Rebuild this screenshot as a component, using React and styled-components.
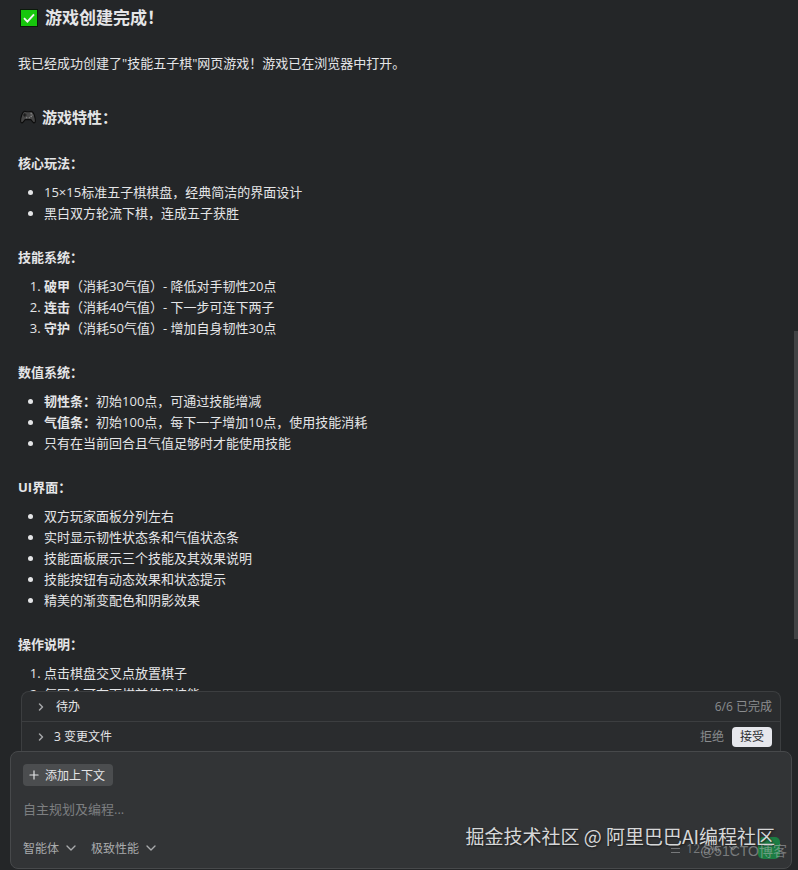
import styled, { createGlobalStyle } from "styled-components";
import { ChevronDown, ChevronRight, Plus } from "lucide-react";

const GlobalStyle = createGlobalStyle`
    * {
        box-sizing: border-box;
    }
    body {
        margin: 0;
        background: #242628;
        color: #e4e5e7;
        font-family: "Open Sans", "Noto Sans CJK SC", sans-serif;
        font-size: 13px;
        line-height: 21px;
    }
    button, select, textarea {
        font: inherit;
        color: inherit;
        border: none;
        background: none;
        padding: 0;
        margin: 0;
    }
`;

const sections = [
    {
        title: "核心玩法：",
        items: [
            { text: "15×15标准五子棋棋盘，经典简洁的界面设计" },
            { text: "黑白双方轮流下棋，连成五子获胜" },
        ],
    },
    {
        title: "技能系统：",
        ordered: true,
        items: [
            { name: "破甲", text: "（消耗30气值）- 降低对手韧性20点" },
            { name: "连击", text: "（消耗40气值）- 下一步可连下两子" },
            { name: "守护", text: "（消耗50气值）- 增加自身韧性30点" },
        ],
    },
    {
        title: "数值系统：",
        items: [
            { name: "韧性条：", text: "初始100点，可通过技能增减" },
            { name: "气值条：", text: "初始100点，每下一子增加10点，使用技能消耗" },
            { text: "只有在当前回合且气值足够时才能使用技能" },
        ],
    },
    {
        title: "UI界面：",
        items: [
            { text: "双方玩家面板分列左右" },
            { text: "实时显示韧性状态条和气值状态条" },
            { text: "技能面板展示三个技能及其效果说明" },
            { text: "技能按钮有动态效果和状态提示" },
            { text: "精美的渐变配色和阴影效果" },
        ],
    },
    {
        title: "操作说明：",
        ordered: true,
        items: [
            { text: "点击棋盘交叉点放置棋子" },
            { text: "每回合可在下棋前使用技能" },
        ],
    },
];

const CheckIcon = () => (
    <svg width="18" height="18" viewBox="0 0 18 18" aria-hidden="true">
        <rect x="0.5" y="0.5" width="17" height="17" fill="#16c60c" stroke="#0b1a0a" />
        <path d="M4 9.2 7.4 12.6 14 5.4" fill="none" stroke="#f4f4f4" strokeWidth="1.9" />
    </svg>
);

const GamepadIcon = () => (
    <svg width="16" height="14" viewBox="0 0 16 14" aria-hidden="true">
        <path
            d="M4 1.5C5 .8 5.8 1.8 8 1.8S11 .8 12 1.5C14 2.6 15.4 8 15.4 11c0 2-1.6 2.3-2.5 1.2L10.8 9.6H5.2L3.1 12.2C2.2 13.3.6 13 .6 11 .6 8 2 2.6 4 1.5Z"
            fill="#464646"
            stroke="#0c0c0c"
            strokeWidth="1.1"
        />
        <path d="M4.8 3.2v3.6M3 5h3.6" stroke="#191919" strokeWidth="1.1" />
        <circle cx="11.2" cy="3.8" r=".8" fill="#8a8a8a" />
        <circle cx="11.2" cy="6.4" r=".8" fill="#8a8a8a" />
        <circle cx="12.7" cy="5.1" r=".7" fill="#777" />
        <circle cx="6.6" cy="7.6" r=".8" fill="#777" />
        <circle cx="9.4" cy="7.6" r=".8" fill="#777" />
    </svg>
);

const Section = ({ title, ordered, items }) => (
    <SectionWrap>
        <SectionTitle>{title}</SectionTitle>
        <List as={ordered ? "ol" : "ul"}>
            {items.map((item) => (
                <li key={item.text}>
                    {item.name && <strong>{item.name}</strong>}
                    {item.text}
                </li>
            ))}
        </List>
    </SectionWrap>
);

const App = () => {
    return (
        <Page>
            <GlobalStyle />
            <Chat>
                <Title>
                    <CheckIcon />
                    游戏创建完成！
                </Title>
                <Intro>我已经成功创建了"技能五子棋"网页游戏！游戏已在浏览器中打开。</Intro>
                <SubTitle>
                    <GamepadIcon />
                    游戏特性：
                </SubTitle>
                {sections.map((section) => (
                    <Section key={section.title} {...section} />
                ))}
            </Chat>
            <ScrollThumb />
            <Status>
                <StatusRow>
                    <Toggle $gap="9px">
                        <ChevronRight size={12} strokeWidth={3} color="#a4a6a8" />
                        待办
                    </Toggle>
                    <Muted>6/6 已完成</Muted>
                </StatusRow>
                <StatusRow>
                    <Toggle $gap="7px">
                        <ChevronRight size={12} strokeWidth={3} color="#a4a6a8" />
                        3 变更文件
                    </Toggle>
                    <Actions>
                        <Reject>拒绝</Reject>
                        <Accept>接受</Accept>
                    </Actions>
                </StatusRow>
            </Status>
            <Composer>
                <AddContext>
                    <Plus size={14} strokeWidth={2} />
                    添加上下文
                </AddContext>
                <Prompt aria-label="输入" rows={1} placeholder="自主规划及编程..." />
                <Toolbar>
                    <Picker>
                        <select aria-label="模式">
                            <option>智能体</option>
                        </select>
                        <ChevronDown size={16} strokeWidth={2} />
                    </Picker>
                    <Picker>
                        <select aria-label="模型">
                            <option>极致性能</option>
                        </select>
                        <ChevronDown size={16} strokeWidth={2} />
                    </Picker>
                    <Usage>
                        <svg width="9" height="10" viewBox="0 0 9 10" aria-hidden="true">
                            <path d="M0 1.5h9M0 5.5h9M0 9.5h9" stroke="currentColor" />
                        </svg>
                        12.5%
                        <ChevronDown size={14} />
                    </Usage>
                    <Send aria-label="发送" />
                </Toolbar>
                <Mark>掘金技术社区 @ 阿里巴巴AI编程社区</Mark>
                <BlogMark>@51CTO博客</BlogMark>
            </Composer>
        </Page>
    );
};

const Page = styled.div`
    position: relative;
    display: flex;
    flex-direction: column;
    height: 100vh;
    padding-bottom: 1px;
`;

const Chat = styled.main`
    flex: 1;
    min-height: 0;
    overflow: hidden;
    padding: 6px 18px 0;
`;

const Title = styled.h2`
    display: flex;
    align-items: center;
    gap: 7px;
    margin: 0 0 23px;
    padding-left: 2px;
    font-size: 17px;
    line-height: 24px;
`;

const Intro = styled.p`
    margin: 0 0 31px;
`;

const SubTitle = styled.h3`
    display: flex;
    align-items: center;
    gap: 6px;
    margin: 0 0 24px;
    padding-left: 2px;
    font-size: 15px;
    line-height: 24px;
`;

const SectionWrap = styled.section`
    margin-bottom: 23px;
`;

const SectionTitle = styled.h4`
    margin: 0 0 8px;
    font-size: 13px;
`;

const List = styled.ul`
    margin: 0;
    padding-left: 26px;
`;

const ScrollThumb = styled.div`
    position: absolute;
    top: 38%;
    right: 0;
    width: 4px;
    height: 308px;
    background: #424345;
`;

const Status = styled.div`
    margin: 0 17px 0 21px;
    border: 1px solid #3c3e40;
    border-bottom: none;
    border-radius: 8px 8px 0 0;
    background: #2a2c2e;
    font-size: 12px;
`;

const StatusRow = styled.div`
    display: flex;
    align-items: center;
    justify-content: space-between;
    height: 29px;
    padding: 0 8px 0 13px;

    & + & {
        height: 30px;
        border-top: 1px solid #3c3e40;
    }
`;

const Toggle = styled.button`
    display: flex;
    align-items: center;
    gap: ${(props) => props.$gap};
`;

const Muted = styled.span`
    color: #8b8d8f;
`;

const Actions = styled.div`
    display: flex;
    align-items: center;
    gap: 8px;
`;

const Reject = styled.button`
    color: #8b8d8f;
`;

const Accept = styled.button`
    height: 20px;
    padding: 0 8px;
    border-radius: 4px;
    background: #e6e7ec;
    color: #2a2c2e;
    line-height: 20px;
`;

const Composer = styled.form`
    position: relative;
    display: flex;
    flex-direction: column;
    align-items: flex-start;
    margin: 0 6px 0 10px;
    padding: 12px 11px 8px 12px;
    border: 1px solid #47494b;
    border-radius: 8px;
    background: #323436;
    font-size: 12px;
`;

const AddContext = styled.button.attrs({ type: "button" })`
    display: flex;
    align-items: center;
    gap: 4px;
    height: 22px;
    padding: 0 8px 0 4px;
    border-radius: 4px;
    background: #4b4d4f;
`;

const Prompt = styled.textarea`
    width: 100%;
    height: 21px;
    margin: 13px 0 16px;
    font-size: 13px;
    resize: none;
    outline: none;

    &::placeholder {
        color: #7d7f81;
    }
`;

const Toolbar = styled.div`
    display: flex;
    align-items: center;
    gap: 12px;
    width: 100%;
    height: 24px;
    color: #a9abad;
`;

const Picker = styled.label`
    display: flex;
    align-items: center;
    gap: 3px;

    select {
        appearance: none;
        outline: none;
    }
`;

const Usage = styled.span`
    display: flex;
    align-items: center;
    gap: 6px;
    margin-left: auto;
    margin-right: 6px;
    color: #77797b;
`;

const Send = styled.button.attrs({ type: "button" })`
    width: 22px;
    height: 22px;
    border-radius: 5px;
    background: #1c7d43;
`;

const Mark = styled.span`
    position: absolute;
    right: 16px;
    bottom: 18px;
    color: #d6d7d8;
    font-family: "Noto Sans CJK SC", sans-serif;
    font-size: 19px;
    line-height: 28px;
    text-shadow: 1px 1px 2px #1a1b1c;
    white-space: nowrap;
    pointer-events: none;
`;

const BlogMark = styled.span`
    position: absolute;
    right: 4px;
    bottom: 6px;
    color: rgba(190, 192, 194, 0.5);
    font-family: "Liberation Sans", "Noto Sans CJK SC", sans-serif;
    font-size: 14px;
    white-space: nowrap;
    pointer-events: none;
`;

export default App;
